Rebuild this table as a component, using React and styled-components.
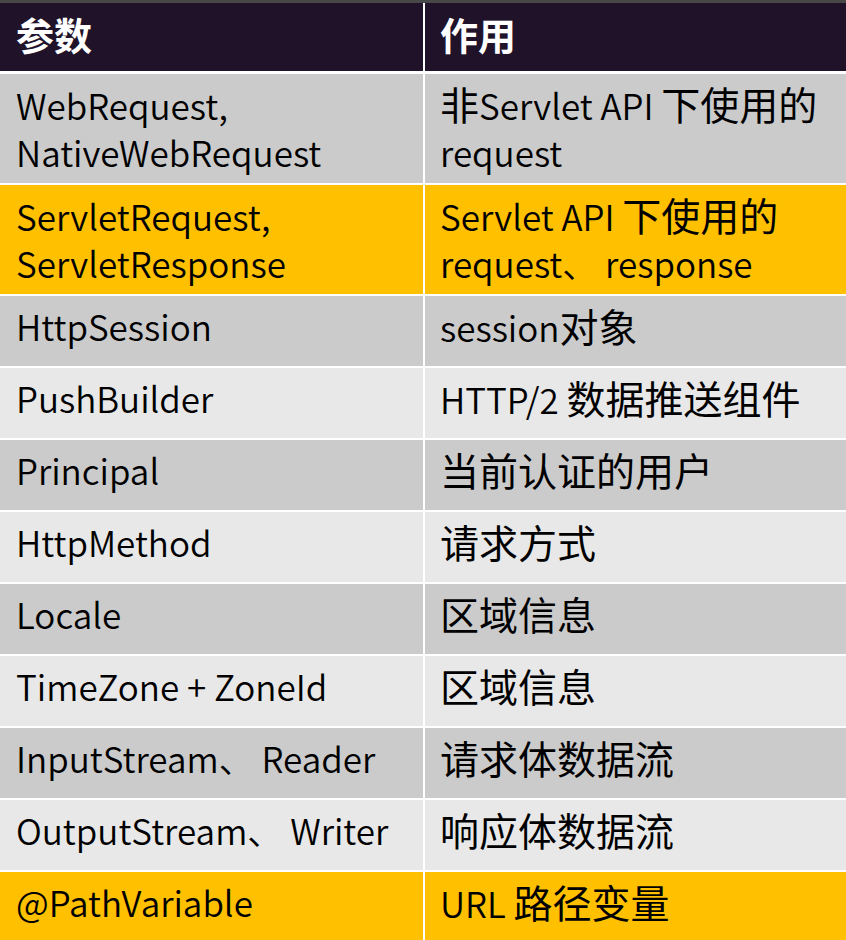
import React from "react";
import styled, { createGlobalStyle } from "styled-components";

const GlobalStyle = createGlobalStyle`
  html, body {
    margin: 0;
    padding: 0;
    background: #ffffff;
  }
  body {
    font-family: "Noto Sans CJK SC", "Noto Sans", sans-serif;
  }
`;

const TopStrip = styled.div`
  height: 3px;
  background: #484848;
`;

const Table = styled.div`
  display: grid;
  grid-template-columns: 423px 421px;
  column-gap: 2px;
  row-gap: 2px;
  width: 846px;
  background: #ffffff;
`;

const HeadCell = styled.div`
  height: 68px;
  margin-bottom: 1px;
  background: #1f1229;
  color: #ffffff;
  font-size: 38px;
  font-weight: 700;
  line-height: 62px;
  padding-left: ${(props) => (props.$right ? "15px" : "16px")};
  box-sizing: border-box;
`;

const tones = {
  dark: "#cbcbcb",
  light: "#e8e8e8",
  accent: "#ffc000",
};

const Cell = styled.div`
  display: flex;
  align-items: center;
  box-sizing: border-box;
  min-height: ${(props) => (props.$tall ? "109px" : "70px")};
  padding: 0 10px ${(props) => (props.$tall ? "2px" : "11px")}
    ${(props) => (props.$right ? "15px" : "16px")};
  background: ${(props) => tones[props.$tone]};
  color: #000000;
  font-size: 35px;
  font-weight: 350;
  line-height: 47px;
`;

const Lines = styled.div`
  white-space: pre-line;
`;

// CJK runs are set a little larger than the latin text, as in the slide
const Han = styled.span`
  display: inline-block;
  font-size: 39px;
  font-weight: 400;
  line-height: 47px;
`;

const hanPattern = /([\u4e00-\u9fff]+)/;

function Mixed({ text }) {
  return text.split(hanPattern).map((part, i) =>
    i % 2 === 1 ? <Han key={i}>{part}</Han> : part
  );
}

const rows = [
  { param: "WebRequest,\nNativeWebRequest", use: "非Servlet API 下使用的\nrequest", tone: "dark", tall: true },
  { param: "ServletRequest,\nServletResponse", use: "Servlet API 下使用的\nrequest、 response", tone: "accent", tall: true },
  { param: "HttpSession", use: "session对象", tone: "dark" },
  { param: "PushBuilder", use: "HTTP/2 数据推送组件", tone: "light" },
  { param: "Principal", use: "当前认证的用户", tone: "dark" },
  { param: "HttpMethod", use: "请求方式", tone: "light" },
  { param: "Locale", use: "区域信息", tone: "dark" },
  { param: "TimeZone + ZoneId", use: "区域信息", tone: "light" },
  { param: "InputStream、 Reader", use: "请求体数据流", tone: "dark" },
  { param: "OutputStream、 Writer", use: "响应体数据流", tone: "light" },
  { param: "@PathVariable", use: "URL 路径变量", tone: "accent" },
];

export default function App() {
  return (
    <>
      <GlobalStyle />
      <TopStrip />
      <Table>
        <HeadCell>参数</HeadCell>
        <HeadCell $right>作用</HeadCell>
        {rows.map((row) => (
          <React.Fragment key={row.param}>
            <Cell $tone={row.tone} $tall={row.tall}>
              <Lines>
                <Mixed text={row.param} />
              </Lines>
            </Cell>
            <Cell $tone={row.tone} $tall={row.tall} $right>
              <Lines>
                <Mixed text={row.use} />
              </Lines>
            </Cell>
          </React.Fragment>
        ))}
      </Table>
    </>
  );
}
